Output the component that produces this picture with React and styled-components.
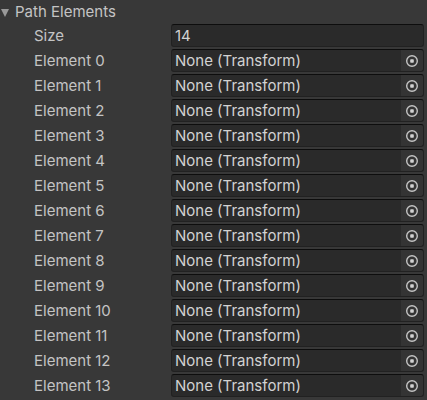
import React from "react";
import styled, { createGlobalStyle } from "styled-components";

const GlobalStyle = createGlobalStyle`
  html, body {
    margin: 0;
    padding: 0;
    background: #383838;
  }
  body {
    font-family: Inter, "Noto Sans", sans-serif;
    font-size: 15px;
    color: #c4c4c4;
  }
`;

const Panel = styled.div`
  width: 427px;
  height: 400px;
  background: #383838;
  overflow: hidden;
`;

const Foldout = styled.div`
  display: flex;
  align-items: center;
  height: 23px;
  gap: 6px;
  padding-left: 1px;
`;

const Arrow = styled.span`
  width: 0;
  height: 0;
  border-left: 4.5px solid transparent;
  border-right: 4.5px solid transparent;
  border-top: 8px solid #999999;
  margin-top: 2px;
`;

const Row = styled.div`
  display: flex;
  align-items: center;
  height: 25px;
  padding-left: 34px;
  padding-right: 3px;
`;

const Label = styled.span`
  width: 137px;
  flex: none;
  white-space: nowrap;
`;

const Field = styled.div`
  flex: 1;
  display: flex;
  align-items: center;
  height: 23px;
  box-sizing: border-box;
  background: #2a2a2a;
  border: 1px solid #212121;
  border-top-color: #0d0d0d;
  border-radius: 3px;
  color: #d2d2d2;
  overflow: hidden;
`;

const FieldText = styled.span`
  flex: 1;
  padding-left: 3px;
  white-space: nowrap;
`;

const PickerButton = styled.span`
  width: 22px;
  height: 100%;
  display: flex;
  align-items: center;
  justify-content: center;
  background: #343434;
  border-radius: 0 2px 2px 0;
`;

function PickerIcon() {
  return (
    <svg width="14" height="14" viewBox="0 0 14 14">
      <circle cx="7" cy="7" r="5.3" fill="none" stroke="#c4c4c4" strokeWidth="1.4" />
      <rect x="5.2" y="5.2" width="3.6" height="3.6" rx="0.8" fill="#d2d2d2" />
    </svg>
  );
}

const elements = Array.from({ length: 14 }, (_, i) => `Element ${i}`);

export default function App() {
  return (
    <Panel>
      <GlobalStyle />
      <Foldout>
        <Arrow />
        <span>Path Elements</span>
      </Foldout>
      <Row>
        <Label>Size</Label>
        <Field>
          <FieldText>14</FieldText>
        </Field>
      </Row>
      {elements.map((name) => (
        <Row key={name}>
          <Label>{name}</Label>
          <Field>
            <FieldText>None (Transform)</FieldText>
            <PickerButton>
              <PickerIcon />
            </PickerButton>
          </Field>
        </Row>
      ))}
    </Panel>
  );
}
